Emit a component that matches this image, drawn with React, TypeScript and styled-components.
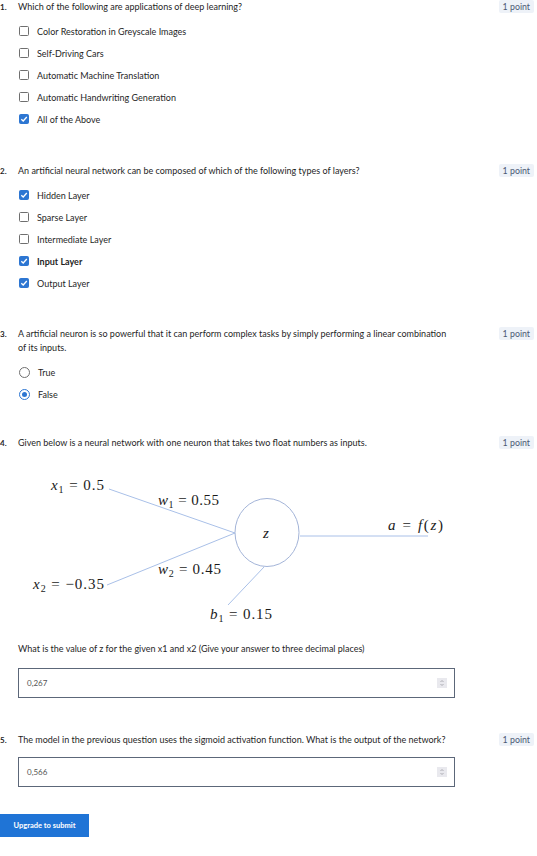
import styled, { createGlobalStyle } from "styled-components";

const GlobalStyle = createGlobalStyle`
  body {
    margin: 0;
    background: #ffffff;
    font-family: Lato, "Liberation Sans", sans-serif;
    color: #1f1f1f;
  }
`;

const Page = styled.main`
  width: 537px;
  display: flex;
  flex-direction: column;
`;

const Question = styled.section<{ $gap?: number }>`
  display: grid;
  grid-template-columns: 18px 437px 1fr;
  align-items: start;
  margin-top: ${(p) => p.$gap ?? 0}px;
`;

const Num = styled.span`
  font-size: 8px;
  font-weight: 700;
  line-height: 14px;
`;

const Body = styled.div`
  display: flex;
  flex-direction: column;
`;

const Prompt = styled.p<{ $gap?: number }>`
  margin: ${(p) => p.$gap ?? 0}px 0 0;
  font-size: 9px;
  line-height: 14px;
`;

const Badge = styled.span`
  justify-self: end;
  margin: 0 3px 0 0;
  padding: 0 4px;
  height: 13px;
  line-height: 13px;
  font-size: 8.8px;
  color: #4a5873;
  background: #eef2f8;
  border-radius: 2px;
  white-space: nowrap;
`;

const Options = styled.ul`
  list-style: none;
  margin: 6px 0 0;
  padding: 0;
`;

const Option = styled.li<{ $bold?: boolean }>`
  display: flex;
  align-items: center;
  gap: 8px;
  height: 22px;
  padding-left: 1px;
  font-size: 9px;
  font-weight: ${(p) => (p.$bold ? 700 : 400)};
`;

const Box = styled.span<{ $on?: boolean }>`
  width: 10px;
  height: 10px;
  box-sizing: border-box;
  border: 1px solid ${(p) => (p.$on ? "#2d76d2" : "#6f6f6f")};
  background: ${(p) => (p.$on ? "#2d76d2" : "#ffffff")};
  border-radius: 1.5px;
  display: flex;
  align-items: center;
  justify-content: center;
`;

const Radio = styled.span<{ $on?: boolean }>`
  width: 11px;
  height: 11px;
  box-sizing: border-box;
  border-radius: 50%;
  border: ${(p) => (p.$on ? "1.5px solid #2d76d2" : "1px solid #6f6f6f")};
  display: flex;
  align-items: center;
  justify-content: center;
  &::after {
    content: "";
    display: ${(p) => (p.$on ? "block" : "none")};
    width: 5px;
    height: 5px;
    border-radius: 50%;
    background: #2d76d2;
  }
`;

const Diagram = styled.svg`
  display: block;
  margin-top: 10px;
  font-family: "Liberation Serif", "DejaVu Serif", serif;
  font-size: 15px;
  fill: #1a1a1a;
`;

const AnswerField = styled.div<{ $gap: number }>`
  margin-top: ${(p) => p.$gap}px;
  height: 30px;
  box-sizing: border-box;
  border: 1px solid #5c6779;
  display: flex;
  align-items: center;
  justify-content: space-between;
  padding: 0 7px 0 8px;
  font-size: 8px;
  color: #555555;
`;

const Spinner = styled.span`
  width: 10px;
  height: 10px;
  background: #e9e9ee;
  display: flex;
  align-items: center;
  justify-content: center;
`;

const SubmitButton = styled.button`
  margin-top: 27px;
  width: 89px;
  height: 23px;
  border: none;
  background: #1f74d6;
  color: #ffffff;
  font-family: Lato, "Liberation Sans", sans-serif;
  font-size: 7.5px;
  font-weight: 700;
  padding: 0;
  cursor: pointer;
`;

function Check() {
  return (
    <svg width="8" height="8" viewBox="0 0 8 8">
      <polyline points="1.3,4.2 3.2,6 6.8,2" fill="none" stroke="#fff" strokeWidth="1.3" />
    </svg>
  );
}

type Choice = { label: string; on?: boolean; bold?: boolean };

function CheckList({ items }: { items: Choice[] }) {
  return (
    <Options>
      {items.map((c) => (
        <Option key={c.label} $bold={c.bold}>
          <Box $on={c.on}>{c.on && <Check />}</Box>
          {c.label}
        </Option>
      ))}
    </Options>
  );
}

function Answer({ value, gap }: { value: string; gap: number }) {
  return (
    <AnswerField $gap={gap}>
      <span>{value}</span>
      <Spinner>
        <svg width="6" height="8" viewBox="0 0 6 8">
          <polyline points="1.5,3 3,1.5 4.5,3" fill="none" stroke="#9a9aa2" strokeWidth="0.8" />
          <polyline points="1.5,5 3,6.5 4.5,5" fill="none" stroke="#9a9aa2" strokeWidth="0.8" />
        </svg>
      </Spinner>
    </AnswerField>
  );
}

const line = "#a9c0e8";

function Neuron() {
  return (
    <Diagram width="437" height="178" viewBox="18 460 437 178">
      <line x1="109" y1="489" x2="235" y2="533" stroke={line} />
      <line x1="107" y1="585" x2="235" y2="533" stroke={line} />
      <line x1="300" y1="536" x2="428" y2="536" stroke={line} />
      <line x1="264" y1="567" x2="228" y2="605" stroke={line} />
      <ellipse cx="267" cy="532.5" rx="32" ry="34" fill="none" stroke="#a3b4d8" />

      <text x="51" y="490" textLength="53" lengthAdjust="spacing">
        <tspan fontStyle="italic">x</tspan>
        <tspan fontSize="10" dy="3">1</tspan>
        <tspan dy="-3"> = 0.5</tspan>
      </text>
      <text x="158" y="505" textLength="61" lengthAdjust="spacing">
        <tspan fontStyle="italic">w</tspan>
        <tspan fontSize="10" dy="3">1</tspan>
        <tspan dy="-3"> = 0.55</tspan>
      </text>
      <text x="158" y="574" textLength="63" lengthAdjust="spacing">
        <tspan fontStyle="italic">w</tspan>
        <tspan fontSize="10" dy="3">2</tspan>
        <tspan dy="-3"> = 0.45</tspan>
      </text>
      <text x="33" y="589" textLength="71" lengthAdjust="spacing">
        <tspan fontStyle="italic">x</tspan>
        <tspan fontSize="10" dy="3">2</tspan>
        <tspan dy="-3"> = −0.35</tspan>
      </text>
      <text x="388" y="530" textLength="55" lengthAdjust="spacing">
        <tspan fontStyle="italic">a</tspan> = <tspan fontStyle="italic">f</tspan>(<tspan fontStyle="italic">z</tspan>)
      </text>
      <text x="210" y="619" textLength="62" lengthAdjust="spacing">
        <tspan fontStyle="italic">b</tspan>
        <tspan fontSize="10" dy="3">1</tspan>
        <tspan dy="-3"> = 0.15</tspan>
      </text>
      <text x="263" y="538" fontStyle="italic">z</text>
    </Diagram>
  );
}

export default function App() {
  return (
    <>
      <GlobalStyle />
      <Page>
        <Question>
          <Num>1.</Num>
          <Body>
            <Prompt>Which of the following are applications of deep learning?</Prompt>
            <CheckList
              items={[
                { label: "Color Restoration in Greyscale Images" },
                { label: "Self-Driving Cars" },
                { label: "Automatic Machine Translation" },
                { label: "Automatic Handwriting Generation" },
                { label: "All of the Above", on: true },
              ]}
            />
          </Body>
          <Badge>1 point</Badge>
        </Question>

        <Question $gap={34}>
          <Num>2.</Num>
          <Body>
            <Prompt>An artificial neural network can be composed of which of the following types of layers?</Prompt>
            <CheckList
              items={[
                { label: "Hidden Layer", on: true },
                { label: "Sparse Layer" },
                { label: "Intermediate Layer" },
                { label: "Input Layer", on: true, bold: true },
                { label: "Output Layer", on: true },
              ]}
            />
          </Body>
          <Badge>1 point</Badge>
        </Question>

        <Question $gap={33}>
          <Num>3.</Num>
          <Body>
            <Prompt>
              A artificial neuron is so powerful that it can perform complex tasks by simply performing a linear
              combination of its inputs.
            </Prompt>
            <Options>
              <Option>
                <Radio />
                True
              </Option>
              <Option>
                <Radio $on />
                False
              </Option>
            </Options>
          </Body>
          <Badge>1 point</Badge>
        </Question>

        <Question $gap={31}>
          <Num>4.</Num>
          <Body>
            <Prompt>Given below is a neural network with one neuron that takes two float numbers as inputs.</Prompt>
            <Neuron />
            <Prompt $gap={4}>What is the value of z for the given x1 and x2 (Give your answer to three decimal places)</Prompt>
            <Answer value="0,267" gap={12} />
          </Body>
          <Badge>1 point</Badge>
        </Question>

        <Question $gap={35}>
          <Num>5.</Num>
          <Body>
            <Prompt>The model in the previous question uses the sigmoid activation function. What is the output of the network?</Prompt>
            <Answer value="0,566" gap={10} />
          </Body>
          <Badge>1 point</Badge>
        </Question>

        <SubmitButton>Upgrade to submit</SubmitButton>
      </Page>
    </>
  );
}
